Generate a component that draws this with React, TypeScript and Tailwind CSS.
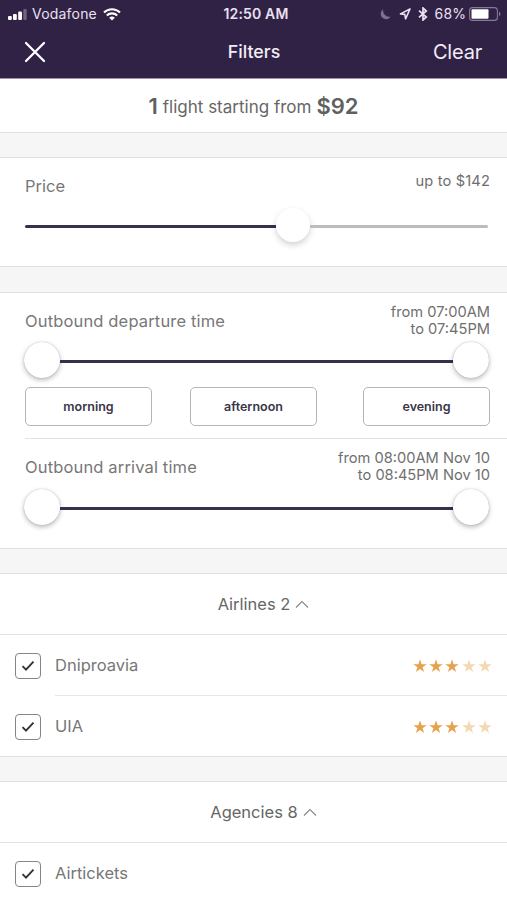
import { FC, ReactNode } from "react"

type SliderProps = {
  value?: number,
  range?: boolean,
}

type TimeProps = {
  title: string,
  from: string,
  to: string,
}

type RowProps = {
  name: string,
  rating?: number,
}

const AIRLINES = [
  { name: "Dniproavia", rating: 3 },
  { name: "UIA", rating: 3 },
]

const AGENCIES = [
  { name: "Airtickets" },
]

const DAY_PARTS = ["morning", "afternoon", "evening"]

const StatusBar: FC = () => (
  <div className="grid h-7 grid-cols-[1fr_auto_1fr] items-center pl-2 pr-[6px] text-[14px] leading-none text-[#e9e0f2]">
    <div className="flex items-center">
      <svg width="19" height="11" viewBox="0 0 19 11" fill="#fff">
        <rect x="0" y="7" width="3.8" height="4" rx="1" />
        <rect x="5" y="5" width="3.8" height="6" rx="1" />
        <rect x="10.2" y="2.5" width="3.8" height="8.5" rx="1" />
        <rect x="15.3" y="0" width="3.4" height="11" rx="1" opacity=".3" />
      </svg>
      <span className="ml-[5px] tracking-[0.2px]">Vodafone</span>
      <svg className="ml-[6px]" width="18" height="13" viewBox="0 0 18 13" fill="none" stroke="#fff" strokeWidth="2.1">
        <path d="M1 4.6a11.4 11.4 0 0 1 16 0" />
        <path d="M3.8 7.5a7.4 7.4 0 0 1 10.4 0" />
        <path d="M9 12.6 6.2 9.8a4 4 0 0 1 5.6 0Z" fill="#fff" stroke="none" />
      </svg>
    </div>
    <span className="pl-[3px] font-semibold tracking-[0.15px]">12:50 AM</span>
    <div className="flex items-center justify-end">
      <svg width="11" height="11" viewBox="0 0 11 11" fill="#7d718d">
        <path d="M3.200.3A5.400 5.400 0 1 0 10.800 7.500 6.200 6.200 0 0 1 3.200.3Z" />
      </svg>
      <svg className="ml-2" width="12" height="12" viewBox="0 0 12 12" fill="none" stroke="#e9e0f2" strokeWidth="1.6" strokeLinejoin="round">
        <path d="M11 1 1.500 5.900l4.300.5L6.600 10.800Z" />
      </svg>
      <svg className="ml-[7px]" width="10" height="14" viewBox="0 0 10 14" fill="none" stroke="#e9e0f2" strokeWidth="1.7">
        <path d="m1 3.700 7.300 6.300L5 13V1l3.300 3L1 10.300" />
      </svg>
      <span className="ml-[7px] tracking-[0.1px]">68%</span>
      <svg className="ml-[3px]" width="32" height="14" viewBox="0 0 32 14">
        <rect x=".6" y=".6" width="27.800" height="12.800" rx="3" fill="none" stroke="#85799a" strokeWidth="1.1" />
        <rect x="2.500" y="2.300" width="17" height="9.400" rx="1" fill="#fff" />
        <path d="M30 4.800c1.800.5 1.800 3.900 0 4.400Z" fill="#85799a" />
      </svg>
    </div>
  </div>
)

const Header: FC = () => (
  <header className="h-[79px] border-b border-[#9b92a5] bg-[#302244] text-[#f3edf9]">
    <StatusBar />
    <div className="grid h-12 grid-cols-[1fr_auto_1fr] items-center pl-6 pr-[25px]">
      <button className="justify-self-start" aria-label="Close">
        <svg width="22" height="22" viewBox="0 0 22 22" fill="none" stroke="#fff" strokeWidth="2.300" strokeLinecap="round">
          <path d="m2 2 18 18M20 2 2 20" />
        </svg>
      </button>
      <h1 className="pl-[2px] text-[17.800px] font-medium">Filters</h1>
      <button className="justify-self-end text-[20px] tracking-[-0.2px]">Clear</button>
    </div>
  </header>
)

const Gap: FC<{ tall?: boolean }> = ({ tall }) => (
  <div className={tall ? 'h-[27px] border-y border-[#e0e0e0] bg-[#f6f6f6]' : 'h-[26px] border-y border-[#e0e0e0] bg-[#f6f6f6]'} />
)

const Thumb: FC = () => (
  <div className="size-9 shrink-0 rounded-full bg-white shadow-[0_2px_5px_rgba(0,0,0,0.28),0_0_1px_rgba(0,0,0,0.3)]" />
)

const Slider: FC<SliderProps> = ({ value = 100, range }) => {
  if (range) {
    return (
      <div className="flex h-9 items-center pl-6 pr-[18px]">
        <Thumb />
        <div className="mt-[2px] h-[3px] flex-1 bg-[#36304c]" />
        <Thumb />
      </div>
    )
  }

  return (
    <div className="flex h-9 items-center pl-[25px] pr-[19px]">
      <div className="mt-[2px] h-[3px] rounded-l-full bg-[#36304c]" style={{ width: `${value}%` }} />
      <div className="size-[34px] shrink-0 rounded-full bg-white shadow-[0_3px_6px_rgba(0,0,0,0.18)]" />
      <div className="mt-[2px] h-[3px] flex-1 rounded-r-full bg-[#bcbcbf]" />
    </div>
  )
}

const TimeHeading: FC<TimeProps> = ({ title, from, to }) => (
  <div className="flex h-11 justify-between pl-[25px] pr-[17px]">
    <h2 className="pt-4 text-[16.500px] leading-6 tracking-[0.150px] text-[#777]">{title}</h2>
    <p className="pt-[11px] text-right text-[14.650px] leading-[17px] text-[#6f6f6f]">
      from {from}<br />to {to}
    </p>
  </div>
)

const GroupTitle: FC<{ children: ReactNode }> = ({ children }) => (
  <div className="flex h-[61px] items-center justify-center gap-[5px] border-b border-[#e3e3e3] pl-5 text-[16.500px] text-[#666]">
    <span>{children}</span>
    <svg width="14" height="9" viewBox="0 0 14 9" fill="none" stroke="#8a8a8a" strokeWidth="1.200">
      <path d="m1 7.500 6-6 6 6" />
    </svg>
  </div>
)

const Stars: FC<{ rating: number }> = ({ rating }) => (
  <div className="flex gap-[2.300px] pt-[2px]">
    {[1, 2, 3, 4, 5].map((star) => (
      <svg key={star} width="14" height="14" viewBox="0 0 14 14" fill={star <= rating ? "#e8a14d" : "#f4d9b0"}>
        <path d="m7 .3 1.600 4.900h5.100L9.600 8.200l1.500 4.900L7 10.100l-4.100 3 1.500-4.900L.3 5.200h5.100Z" />
      </svg>
    ))}
  </div>
)

const Row: FC<RowProps> = ({ name, rating }) => (
  <label className="group flex h-[61px] pl-[15px] last:h-[60px]">
    <span className="mt-[18px] grid size-[26px] place-items-center rounded-[4px] border-[1.500px] border-[#858585]">
      <svg width="14" height="12" viewBox="0 0 14 12" fill="none" stroke="#333" strokeWidth="1.900">
        <path d="m1.500 6.200 3.500 3.500 7.500-8" />
      </svg>
    </span>
    <span className="ml-[14px] flex flex-1 items-center justify-between border-b border-[#e6e6e6] pr-[15px] text-[16.500px] text-[#777] group-last:border-b-0">
      {name}
      {rating && <Stars rating={rating} />}
    </span>
  </label>
)

export default function App() {
  return (
    <main className="h-[900px] w-full overflow-hidden bg-white font-['Inter','Liberation_Sans',sans-serif]">
      <Header />
      <p className="flex h-[53px] items-center justify-center gap-[5px] pt-px text-[17px] text-[#666]">
        <b className="text-[22px] font-semibold text-[#606060]">1</b>
        <span className="pt-[3px]">flight starting from</span>
        <b className="text-[22px] font-semibold text-[#606060]">$92</b>
      </p>
      <Gap />
      <section className="h-[108px]">
        <div className="flex justify-between pl-[25px] pr-[17px]">
          <h2 className="pt-4 text-[16.500px] leading-6 text-[#777]">Price</h2>
          <p className="pt-[15px] text-[14.650px] leading-[17px] tracking-[0.150px] text-[#6f6f6f]">up to $142</p>
        </div>
        <div className="pt-[9px]">
          <Slider value={54.200} />
        </div>
      </section>
      <Gap tall />
      <section>
        <div className="h-[145px]">
          <TimeHeading title="Outbound departure time" from="07:00AM" to="07:45PM" />
          <div className="pt-[5px]">
            <Slider range />
          </div>
          <div className="flex pl-[25px] pr-[17px] pt-[9px]">
            {DAY_PARTS.map((part) => (
              <button key={part} className="mr-[38px] h-[39px] w-[127px] rounded-[5px] border border-[#b5b5b8] pt-[2px] text-[12.500px] font-semibold text-[#3a3648] last:mr-0 last:ml-auto">
                {part}
              </button>
            ))}
          </div>
        </div>
        <div className="ml-[25px] border-t border-[#e3e3e3]" />
        <div className="h-[109px]">
          <TimeHeading title="Outbound arrival time" from="08:00AM Nov 10" to="08:45PM Nov 10" />
          <div className="pt-[6px]">
            <Slider range />
          </div>
        </div>
      </section>
      <Gap />
      <section>
        <GroupTitle>Airlines 2</GroupTitle>
        <div>
          {AIRLINES.map((item) => <Row key={item.name} {...item} />)}
        </div>
      </section>
      <Gap />
      <section>
        <GroupTitle>Agencies 8</GroupTitle>
        <div>
          {AGENCIES.map((item) => <Row key={item.name} {...item} />)}
        </div>
      </section>
    </main>
  )
}
